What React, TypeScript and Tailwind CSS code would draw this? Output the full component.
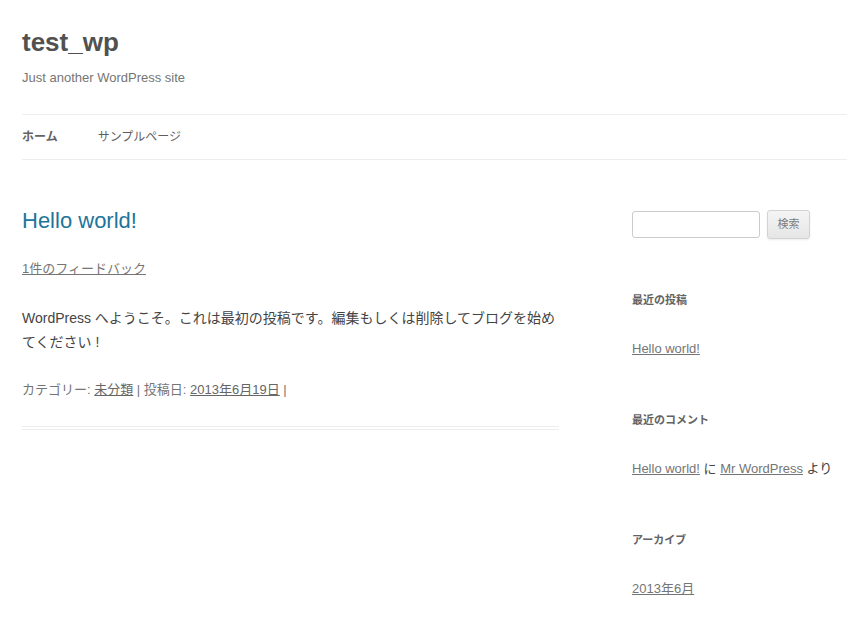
import React from "react";

const font = { fontFamily: '"Liberation Sans", "Noto Sans CJK JP", sans-serif' };

export default function App() {
  return (
    <div className="min-h-[632px] bg-white pl-[22px] pr-[16px] text-[#444]" style={font}>
      <header>
        <h1 className="pt-[18px] text-[26px] font-bold leading-[48px] text-[#515151]">test_wp</h1>
        <h2 className="text-[13px] leading-[24px] text-[#757575]">Just another WordPress site</h2>
        <nav className="mt-[24px] flex h-[46px] items-center border-y border-[#ededed] text-[12px]">
          <a className="font-bold text-[#636363]">ホーム</a>
          <a className="ml-[40px] text-[#5e5e5e]">サンプルページ</a>
        </nav>
      </header>
      <div className="flex">
        <main className="w-[537px] shrink-0 pt-[47px]">
          <article className="border-b-4 border-double border-[#ededed] pb-[24px]">
            <h1 className="text-[22px] leading-[28px] text-[#21759b]">Hello world!</h1>
            <div className="mt-[22px] text-[13px] leading-[24px]">
              <a className="text-[#757575] underline">1件のフィードバック</a>
            </div>
            <div className="mt-[25px] text-[14px] leading-[24px] text-[#444]">
              <p>WordPress へようこそ。これは最初の投稿です。編集もしくは削除してブログを始めてください !</p>
            </div>
            <footer className="mt-[24px] text-[13px] leading-[24px] text-[#757575]">
              カテゴリー: <a className="text-[#666] underline">未分類</a> | 投稿日:{" "}
              <a className="text-[#666] underline">2013年6月19日</a> |
            </footer>
          </article>
        </main>
        <aside className="ml-[73px] flex-1 pt-[50px]">
          <div className="flex items-center">
            <input className="h-[27px] w-[128px] rounded-[3px] border border-[#ccc] bg-white" />
            <button className="ml-[7px] h-[29px] w-[43px] rounded-[3px] border border-[#d2d2d2] bg-gradient-to-b from-[#f4f4f4] to-[#e6e6e6] text-[11px] text-[#7c7c7c] shadow-[0_1px_2px_rgba(64,64,64,0.1)]">
              検索
            </button>
          </div>
          <h3 className="mt-[50px] text-[11px] font-bold leading-[22px] text-[#636363]">最近の投稿</h3>
          <ul className="mt-[26px] text-[13px] leading-[24px]">
            <li><a className="text-[#757575] underline">Hello world!</a></li>
          </ul>
          <h3 className="mt-[48px] text-[11px] font-bold leading-[22px] text-[#636363]">最近のコメント</h3>
          <ul className="mt-[26px] text-[13px] leading-[24px] text-[#444]">
            <li>
              <a className="text-[#757575] underline">Hello world!</a> に{" "}
              <a className="text-[#757575] underline">Mr WordPress</a> より
            </li>
          </ul>
          <h3 className="mt-[48px] text-[11px] font-bold leading-[22px] text-[#636363]">アーカイブ</h3>
          <ul className="mt-[26px] text-[13px] leading-[24px]">
            <li><a className="text-[#757575] underline">2013年6月</a></li>
          </ul>
        </aside>
      </div>
    </div>
  );
}
